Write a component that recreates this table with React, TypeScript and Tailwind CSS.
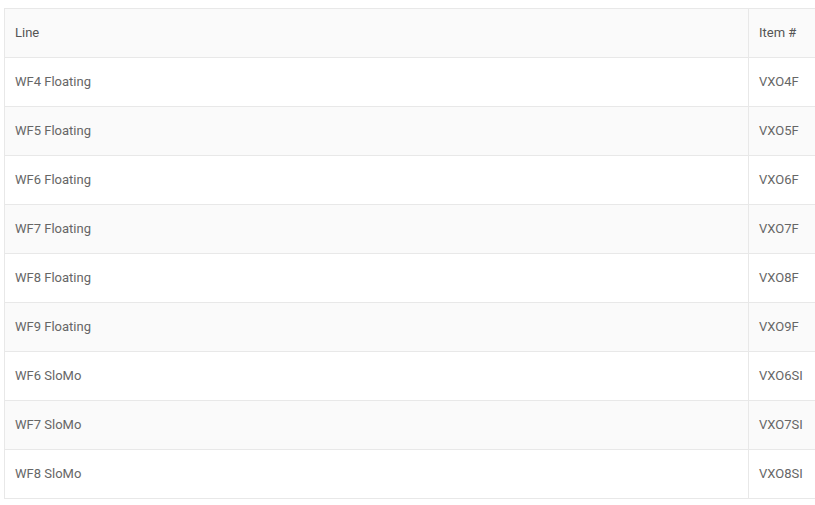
const rows = [
  { line: "WF4 Floating", item: "VXO4F" },
  { line: "WF5 Floating", item: "VXO5F" },
  { line: "WF6 Floating", item: "VXO6F" },
  { line: "WF7 Floating", item: "VXO7F" },
  { line: "WF8 Floating", item: "VXO8F" },
  { line: "WF9 Floating", item: "VXO9F" },
  { line: "WF6 SloMo", item: "VXO6SI" },
  { line: "WF7 SloMo", item: "VXO7SI" },
  { line: "WF8 SloMo", item: "VXO8SI" },
];

export default function App() {
  return (
    <div className="h-[505px] w-[815px] overflow-hidden bg-white pl-[4px] pt-[8px] font-['Roboto',sans-serif] text-[13px]">
      <table className="w-[900px] border-collapse text-left">
        <thead>
          <tr className="h-[49px] bg-[#fafafa]">
            <th className="w-[744px] border border-[#e8e8e8] px-[10px] font-normal text-[#555]">Line</th>
            <th className="border border-[#e8e8e8] px-[10px] font-normal text-[#555]">Item #</th>
          </tr>
        </thead>
        <tbody>
          {rows.map((row, i) => (
            <tr key={row.item} className={`h-[49px] ${i % 2 === 1 ? "bg-[#fafafa]" : "bg-white"}`}>
              <td className="border border-[#e8e8e8] px-[10px] text-[#666]">{row.line}</td>
              <td className="border border-[#e8e8e8] px-[10px] text-[#666]">{row.item}</td>
            </tr>
          ))}
        </tbody>
      </table>
    </div>
  );
}
